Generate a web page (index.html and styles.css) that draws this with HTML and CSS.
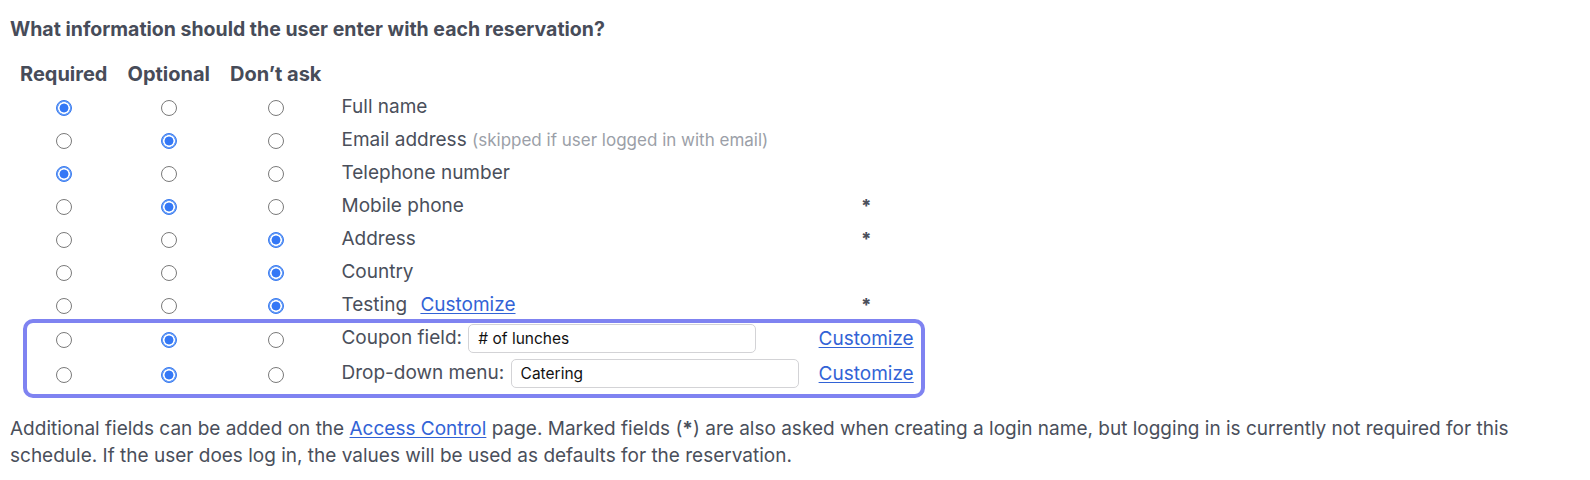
FILE: index.html
```html
<!DOCTYPE html>
<html lang="en">
<head>
<meta charset="utf-8">
<title>Reservation fields</title>
<link rel="stylesheet" href="styles.css">
</head>
<body>
<div class="page">
  <h2 class="title">What information should the user enter with each reservation?</h2>
  <div class="table-wrap">
    <table class="fields">
      <thead>
        <tr>
          <th class="col-radio">Required</th>
          <th class="col-radio">Optional</th>
          <th class="col-radio">Don’t ask</th>
          <th></th>
          <th></th>
        </tr>
      </thead>
      <tbody>
        <tr>
          <td class="col-radio"><input type="radio" name="r1" checked></td>
          <td class="col-radio"><input type="radio" name="r1"></td>
          <td class="col-radio"><input type="radio" name="r1"></td>
          <td class="label">Full name</td>
          <td class="extra"></td>
        </tr>
        <tr>
          <td class="col-radio"><input type="radio" name="r2"></td>
          <td class="col-radio"><input type="radio" name="r2" checked></td>
          <td class="col-radio"><input type="radio" name="r2"></td>
          <td class="label">Email address <span class="hint">(skipped if user logged in with email)</span></td>
          <td class="extra"></td>
        </tr>
        <tr>
          <td class="col-radio"><input type="radio" name="r3" checked></td>
          <td class="col-radio"><input type="radio" name="r3"></td>
          <td class="col-radio"><input type="radio" name="r3"></td>
          <td class="label">Telephone number</td>
          <td class="extra"></td>
        </tr>
        <tr>
          <td class="col-radio"><input type="radio" name="r4"></td>
          <td class="col-radio"><input type="radio" name="r4" checked></td>
          <td class="col-radio"><input type="radio" name="r4"></td>
          <td class="label">Mobile phone</td>
          <td class="extra"><span class="star">*</span></td>
        </tr>
        <tr>
          <td class="col-radio"><input type="radio" name="r5"></td>
          <td class="col-radio"><input type="radio" name="r5"></td>
          <td class="col-radio"><input type="radio" name="r5" checked></td>
          <td class="label">Address</td>
          <td class="extra"><span class="star">*</span></td>
        </tr>
        <tr>
          <td class="col-radio"><input type="radio" name="r6"></td>
          <td class="col-radio"><input type="radio" name="r6"></td>
          <td class="col-radio"><input type="radio" name="r6" checked></td>
          <td class="label">Country</td>
          <td class="extra"></td>
        </tr>
        <tr>
          <td class="col-radio"><input type="radio" name="r7"></td>
          <td class="col-radio"><input type="radio" name="r7"></td>
          <td class="col-radio"><input type="radio" name="r7" checked></td>
          <td class="label">Testing <a href="#" class="link link-gap">Customize</a></td>
          <td class="extra"><span class="star">*</span></td>
        </tr>
        <tr class="tall">
          <td class="col-radio"><input type="radio" name="r8"></td>
          <td class="col-radio"><input type="radio" name="r8" checked></td>
          <td class="col-radio"><input type="radio" name="r8"></td>
          <td class="label">Coupon field: <input type="text" class="text-in" value="# of lunches"></td>
          <td class="extra"><a href="#" class="link">Customize</a></td>
        </tr>
        <tr class="tall">
          <td class="col-radio"><input type="radio" name="r9"></td>
          <td class="col-radio"><input type="radio" name="r9" checked></td>
          <td class="col-radio"><input type="radio" name="r9"></td>
          <td class="label">Drop-down menu: <input type="text" class="text-in" value="Catering"></td>
          <td class="extra"><a href="#" class="link">Customize</a></td>
        </tr>
      </tbody>
    </table>
    <div class="highlight"></div>
  </div>
  <p class="note">Additional fields can be added on the <a href="#" class="link">Access Control</a> page. Marked fields (<b>*</b>) are also asked when creating a login name, but logging in is currently not required for this schedule. If the user does log in, the values will be used as defaults for the reservation.</p>
</div>
</body>
</html>
```

FILE: styles.css
```css
html, body {
  margin: 0;
  padding: 0;
  background: #ffffff;
}

body {
  font-family: Inter, "Liberation Sans", Arial, sans-serif;
  color: #4a4f5b;
  font-size: 19px;
}

.page {
  padding: 17px 10px 0 10px;
}

.title {
  margin: 0;
  font-size: 19.5px;
  line-height: 24px;
  font-weight: 700;
  color: #474c59;
}

.table-wrap {
  position: relative;
  margin-top: 17px;
  display: block;
  width: fit-content;
}

.fields {
  border-collapse: collapse;
  border-spacing: 0;
}

.fields th {
  font-size: 20px;
  font-weight: 700;
  color: #474c59;
  height: 32px;
  padding: 0 10px;
  text-align: center;
  white-space: nowrap;
}

.fields td {
  height: 33px;
  padding: 0 10px;
  white-space: nowrap;
}

.fields tr.tall td {
  height: 35px;
}

.col-radio {
  text-align: center;
}

.label {
  text-align: left;
}

.extra {
  text-align: center;
}

.hint {
  color: #9b9fa8;
  font-size: 17px;
}

.star {
  font-size: 18px;
  font-weight: 800;
  color: #4a4f5b;
}

.link {
  color: #3263d6;
  text-decoration: underline;
  text-underline-offset: 2px;
}

.link-gap {
  margin-left: 8px;
}

input[type="radio"] {
  -webkit-appearance: none;
  appearance: none;
  width: 16px;
  height: 16px;
  margin: 0;
  border: 1px solid #7a7a7a;
  border-radius: 50%;
  background: #ffffff;
  vertical-align: middle;
  box-sizing: border-box;
}

input[type="radio"]:checked {
  border: 1px solid #3a7bf0;
  background: radial-gradient(circle, #3478f6 0 4.1px, #ffffff 4.8px 5.6px, #6ea2f7 6.1px);
}

.text-in {
  box-sizing: border-box;
  width: 288px;
  height: 29px;
  margin-left: 1px;
  padding: 0 9px;
  border: 1px solid #d3d3d6;
  border-radius: 5px;
  font-family: Inter, "Liberation Sans", Arial, sans-serif;
  font-size: 15.5px;
  color: #111111;
  vertical-align: middle;
  background: #ffffff;
}

.highlight {
  position: absolute;
  left: 13px;
  right: -1px;
  top: 261px;
  height: 79px;
  box-sizing: border-box;
  border: 4px solid #7f83f1;
  border-radius: 10px;
  pointer-events: none;
}

.note {
  margin: 24px 0 0 0;
  max-width: 1530px;
  font-size: 19px;
  line-height: 27px;
  color: #4a4f5b;
}

.note b {
  font-weight: 700;
}
```
